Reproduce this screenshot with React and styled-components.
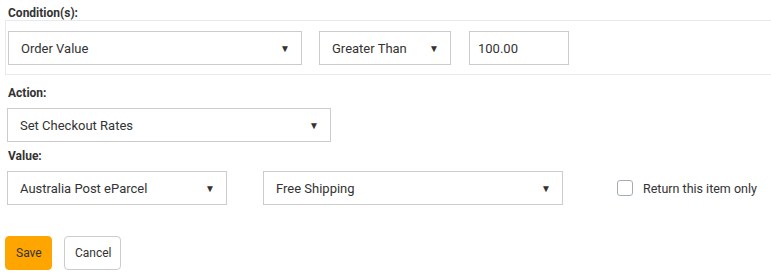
import styled, { createGlobalStyle } from 'styled-components';

const GlobalStyle = createGlobalStyle`
  body {
    margin: 0;
    background: #fff;
    font-family: Roboto, "Liberation Sans", sans-serif;
    color: #333;
  }
`;

function Select({ value, width }) {
  return (
    <SelectBox $width={width}>
      <span>{value}</span>
      <Caret>▼</Caret>
    </SelectBox>
  );
}

function App() {
  return (
    <>
      <GlobalStyle />
      <Page>
        <Label>Condition(s):</Label>
        <ConditionPanel>
          <Row $gap={17}>
            <Select value="Order Value" width={294} />
            <Select value="Greater Than" width={132} />
            <Input defaultValue="100.00" />
          </Row>
        </ConditionPanel>

        <Label $top={11}>Action:</Label>
        <Field>
          <Select value="Set Checkout Rates" width={324} />
        </Field>

        <Label $top={7}>Value:</Label>
        <Field>
          <Row $gap={36}>
            <Select value="Australia Post eParcel" width={220} />
            <Select value="Free Shipping" width={300} />
            <CheckLabel>
              <CheckBox />
              Return this item only
            </CheckLabel>
          </Row>
        </Field>

        <Buttons>
          <SaveButton>Save</SaveButton>
          <CancelButton>Cancel</CancelButton>
        </Buttons>
      </Page>
    </>
  );
}
export default App;

const Page = styled.div`
  padding: 6px 0 0 5px;
`;

const Label = styled.div`
  margin: ${(p) => p.$top || 0}px 0 0 3px;
  font-size: 12px;
  font-weight: 700;
  color: #333;
  line-height: 14px;
`;

const ConditionPanel = styled.div`
  border: 1px solid #e6e9ed;
  border-right: none;
  padding: 10px 0 9px 2px;
`;

const Row = styled.div`
  display: flex;
  align-items: center;
  gap: ${(p) => p.$gap}px;
`;

const Field = styled.div`
  margin: 8px 0 0 2px;
`;

const SelectBox = styled.div`
  box-sizing: border-box;
  width: ${(p) => p.$width}px;
  height: 34px;
  border: 1px solid #ccc;
  background: #fff;
  display: flex;
  align-items: center;
  justify-content: space-between;
  padding: 0 11px 0 12px;
  font-size: 13px;
  color: #333;
`;

const Caret = styled.span`
  font-size: 10px;
  color: #333;
`;

const Input = styled.input`
  box-sizing: border-box;
  width: 100px;
  height: 34px;
  border: 1px solid #ccc;
  padding: 0 8px;
  font-family: inherit;
  font-size: 13px;
  color: #333;
  outline: none;
  margin-left: 1px;
`;

const CheckLabel = styled.label`
  display: flex;
  align-items: center;
  gap: 10px;
  margin-left: 18px;
  font-size: 12.5px;
  color: #333;
`;

const CheckBox = styled.span`
  box-sizing: border-box;
  width: 16px;
  height: 16px;
  border: 1px solid #a3adb8;
  border-radius: 3px;
  background: #fff;
`;

const Buttons = styled.div`
  display: flex;
  gap: 12px;
  margin-top: 31px;
`;

const BaseButton = styled.button`
  box-sizing: border-box;
  height: 34px;
  border-radius: 4px;
  font-family: inherit;
  font-size: 12px;
  color: #333;
  padding: 0 10px;
`;

const SaveButton = styled(BaseButton)`
  width: 47px;
  background: #ffa500;
  border: 1px solid #ffa500;
`;

const CancelButton = styled(BaseButton)`
  width: 57px;
  background: #fff;
  border: 1px solid #ccc;
`;
